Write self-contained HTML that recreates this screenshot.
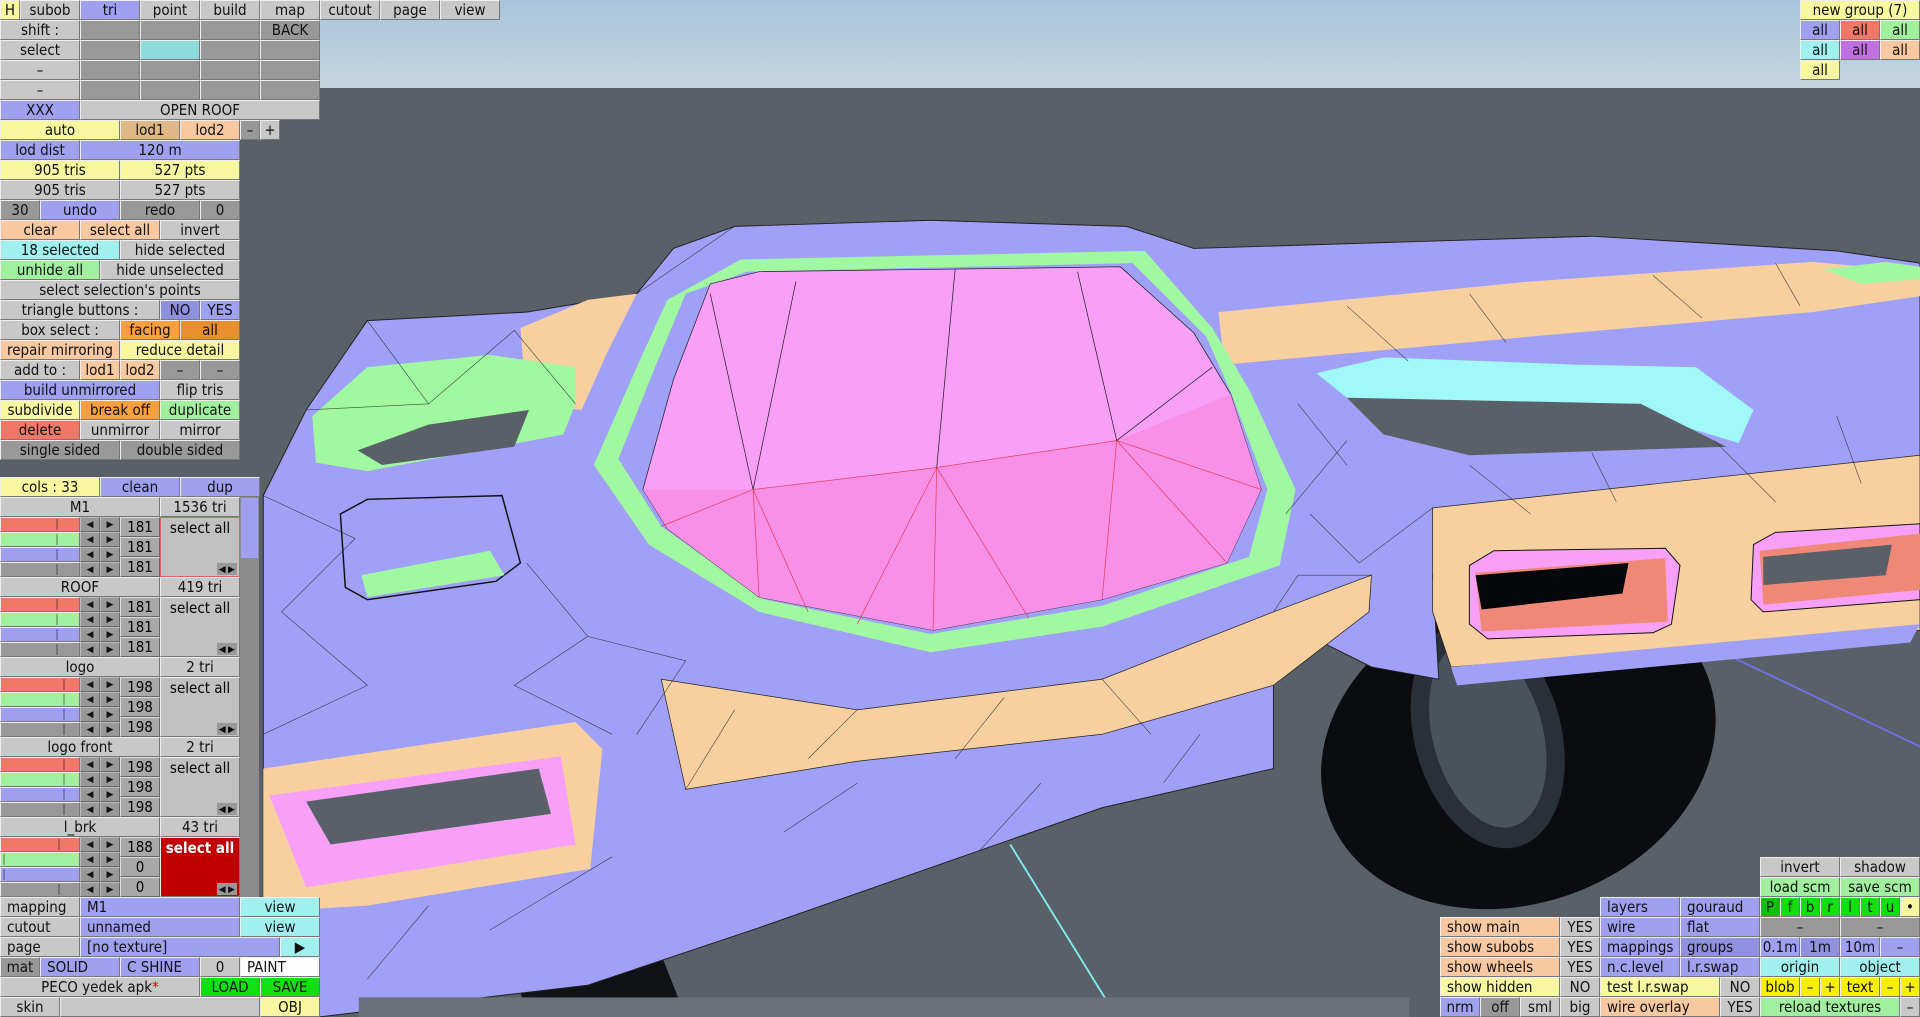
<!DOCTYPE html>
<html><head><meta charset="utf-8"><style>
html,body{margin:0;padding:0;width:1920px;height:1017px;overflow:hidden;background:#596067}
svg.s{position:absolute;left:0;top:0}
.b{position:absolute;box-sizing:border-box;height:20px;line-height:18px;text-align:center;font:15px "DejaVu Sans Condensed","DejaVu Sans","Liberation Sans",sans-serif;color:#111;border:1px solid;border-color:#eee #777 #777 #eee;white-space:nowrap;overflow:hidden}
.l{text-align:left;padding-left:6px}
.g{background:#c8c8c8}.d{background:#989898}.bl{background:#a0a0f0}.bd{background:#9090e0}.y{background:#f8f8a0}.p{background:#f8c8a0}.t{background:#e0b888}
.o{background:#f8a040}.od{background:#e89030}.c{background:#a0f0f0}.gr{background:#a0f0a0}.r{background:#f07868}.G{background:#10e010}.w{background:#fff}.Y{background:#f8f000}.pu{background:#c070e0}
.sl{position:absolute;height:15px;box-sizing:border-box;border:1px solid;border-color:#eee #777 #777 #eee}
.sl i{position:absolute;top:1px;width:2px;height:11px;background:rgba(0,0,0,.25)}
.ar{position:absolute;height:15px;width:20px;box-sizing:border-box;background:#989898;border:1px solid;border-color:#bbb #666 #666 #bbb;font:9px sans-serif;line-height:13px;text-align:center;color:#111}
.n{position:absolute;width:40px;height:20px;box-sizing:border-box;background:#a8a8a8;border:1px solid;border-color:#ddd #666 #666 #ddd;font:15px "DejaVu Sans Condensed",sans-serif;line-height:18px;text-align:center}
.sa{position:absolute;width:80px;height:60px;box-sizing:border-box;background:#c0c0c0;border:1px solid;border-color:#eee #777 #777 #eee;font:15px "DejaVu Sans Condensed",sans-serif;text-align:center;line-height:20px}
.sa span{position:absolute;right:2px;bottom:1px;font:9px sans-serif;line-height:12px;background:#999;padding:0 2px}
</style></head><body>
<svg class="s" width="1920" height="1017" viewBox="0 0 1568 831" preserveAspectRatio="none">
<defs><linearGradient id="sky" x1="0" y1="0" x2="0" y2="1"><stop offset="0" stop-color="#a8c4dc"/><stop offset="1" stop-color="#c4d4de"/></linearGradient></defs>
<rect x="0" y="0" width="1568" height="72" fill="url(#sky)"/>
<rect x="0" y="72" width="1568" height="759" fill="#596067"/>
<!-- wheel -->
<ellipse cx="1240" cy="610" rx="165" ry="128" transform="rotate(-20 1240 610)" fill="#0a0c10"/>
<ellipse cx="1215" cy="600" rx="60" ry="95" transform="rotate(-15 1215 600)" fill="#2a3038"/>
<ellipse cx="1215" cy="600" rx="45" ry="78" transform="rotate(-15 1215 600)" fill="#4a525c"/>
<path d="M420 790 L540 780 L560 831 L430 831 Z" fill="#101216"/>
<line x1="825" y1="690" x2="912" y2="831" stroke="#7ef0f0" stroke-width="1.5"/>
<line x1="1400" y1="530" x2="1568" y2="610" stroke="#7070e8" stroke-width="1.5"/>
<!-- body -->
<path d="M215 405 L250 335 L300 262 L430 255 L520 240 L550 203 L600 185 L760 180 L920 185 L975 203 L1300 193 L1500 205 L1568 215 L1568 430 L1200 455 L1170 470 L1175 555 L1120 545 L1070 520 L1040 540 L1040 628 L900 660 L800 695 L620 758 L480 805 L260 831 L215 831 Z" fill="#a0a0f8" stroke="#222" stroke-width=".8"/>
<path d="M1170 415 L1568 372 L1568 515 L1185 545 L1170 500 Z" fill="#f8d0a0" stroke="#222" stroke-width=".6"/>
<path d="M1185 545 L1568 510 L1560 525 L1190 560 Z" fill="#a0a0f8"/>
<path d="M995 255 L1250 230 L1480 214 L1568 222 L1568 242 L1480 255 L1250 275 L1000 298 Z" fill="#f8d0a0"/>
<path d="M425 268 L480 245 L520 240 L495 290 L475 335 L430 330 Z" fill="#f8d0a0"/>
<path d="M255 340 L300 300 L400 290 L470 300 L470 330 L460 355 L300 385 L258 378 Z" fill="#a0f8a0"/>
<path d="M292 368 L350 347 L432 335 L420 365 L312 380 Z" fill="#596067"/>
<path d="M1075 305 L1130 292 L1290 298 L1385 300 L1432 335 L1420 362 L1380 350 L1340 330 L1130 330 L1100 325 Z" fill="#a0f8f8"/>
<path d="M1100 325 L1340 330 L1380 350 L1410 365 L1200 372 L1130 355 Z" fill="#596067"/>
<!-- roof -->
<path d="M485 380 L520 300 L545 245 L605 212 L935 205 L990 268 L1020 318 L1058 400 L1045 462 L900 512 L760 533 L620 500 L530 445 Z" fill="#a0f8a0"/>
<path d="M505 375 L535 300 L560 240 L610 222 L925 215 L985 275 L1005 320 L1035 400 L1020 455 L900 495 L760 518 L625 490 L540 430 Z" fill="#a0a0f8"/>
<path d="M525 400 L550 310 L580 232 L620 222 L915 218 L975 272 L1005 322 L1030 400 L1002 460 L900 490 L762 515 L620 488 L545 432 Z" fill="#f8a0f8" stroke="#222" stroke-width=".6"/>
<path d="M525 400 L615 400 L765 382 L912 360 L1005 322 L1030 400 L1002 460 L900 490 L762 515 L620 488 L545 432 Z" fill="#f890e8"/>
<g stroke="#e84060" stroke-width=".6" fill="none"><path d="M615 400 L540 430 M615 400 L620 488 M615 400 L660 500 M765 382 L700 510 M765 382 L762 515 M765 382 L840 505 M912 360 L900 490 M912 360 L1002 460 M912 360 L1030 400 M615 400 L765 382 L912 360"/></g>
<g stroke="#222" stroke-width=".6" fill="none"><path d="M615 400 L650 230 M765 382 L780 220 M912 360 L880 222 M615 400 L580 240 M912 360 L990 300"/></g>
<path d="M540 555 L700 580 L900 555 L1040 500 L1120 470 L1118 500 L1040 560 L900 600 L700 622 L560 645 Z" fill="#f8d0a0" stroke="#222" stroke-width=".6"/>
<path d="M215 628 L470 590 L492 612 L482 710 L300 740 L215 745 Z" fill="#f8d0a0"/>
<path d="M220 650 L458 618 L470 690 L250 725 Z" fill="#f8a0f8"/>
<path d="M250 655 L440 628 L450 665 L270 690 Z" fill="#596067"/>
<path d="M278 420 L300 408 L410 405 L425 460 L405 475 L300 490 L282 480 Z" fill="#a0a0f8" stroke="#111" stroke-width="1.2"/>
<path d="M295 470 L400 450 L412 470 L300 488 Z" fill="#a0f8a0"/>
<path d="M1200 462 L1220 450 L1360 448 L1372 462 L1365 510 L1350 517 L1215 522 L1200 510 Z" fill="#f8a0f8" stroke="#111" stroke-width=".8"/>
<path d="M1205 468 L1360 456 L1362 508 L1210 516 Z" fill="#f08878"/>
<path d="M1205 470 L1330 460 L1325 485 L1210 498 Z" fill="#05070a"/>
<path d="M1432 445 L1450 435 L1568 428 L1568 490 L1440 500 L1430 490 Z" fill="#f8a0f8" stroke="#111" stroke-width=".8"/>
<path d="M1437 450 L1568 436 L1568 482 L1440 494 Z" fill="#f08878"/>
<path d="M1440 455 L1545 445 L1540 470 L1440 478 Z" fill="#596067"/>
<path d="M1490 220 L1540 214 L1568 218 L1568 228 L1520 232 Z" fill="#a0f8a0"/>
<g stroke="#222" stroke-width=".5" fill="none" opacity=".8">
<path d="M300 262 L350 330 L420 270 L470 330 M520 240 L600 185 M250 335 L350 330 M215 405 L290 440 L230 500 L300 560 L215 600 M430 460 L480 520 L420 560 L500 600 M480 520 L560 540 L520 600 M600 580 L560 645 M700 580 L660 620 M820 570 L780 620 M900 555 L940 600 M1040 500 L1060 470 L1120 470 M1070 420 L1110 460 L1170 415 M1100 360 L1050 420 M1060 330 L1100 380 M1200 380 L1250 420 M1300 370 L1320 410 M1400 360 L1450 410 M1500 340 L1520 395 M1100 250 L1150 295 M1200 240 L1230 280 M1350 225 L1390 260 M1450 215 L1470 250 M640 680 L700 640 M400 760 L500 700 M300 800 L350 740 M800 695 L850 640 M950 640 L980 600"/>
</g>
<rect x="293" y="815" width="858" height="16" fill="#6b7178"/>
</svg>

<!-- top menu -->
<div class="b y" style="left:0;top:0;width:20px">H</div>
<div class="b g" style="left:20px;top:0;width:60px">subob</div>
<div class="b bl" style="left:80px;top:0;width:60px">tri</div>
<div class="b g" style="left:140px;top:0;width:60px">point</div>
<div class="b g" style="left:200px;top:0;width:60px">build</div>
<div class="b g" style="left:260px;top:0;width:60px">map</div>
<div class="b g" style="left:320px;top:0;width:60px">cutout</div>
<div class="b g" style="left:380px;top:0;width:60px">page</div>
<div class="b g" style="left:440px;top:0;width:60px">view</div>

<div class="b g" style="left:0;top:20px;width:80px">shift :</div>
<div class="b d" style="left:80px;top:20px;width:60px"></div><div class="b d" style="left:140px;top:20px;width:60px"></div><div class="b d" style="left:200px;top:20px;width:60px"></div><div class="b d" style="left:260px;top:20px;width:60px">BACK</div>
<div class="b g" style="left:0;top:40px;width:80px">select</div>
<div class="b d" style="left:80px;top:40px;width:60px"></div><div class="b c" style="left:140px;top:40px;width:60px;background:#8cdcdc"></div><div class="b d" style="left:200px;top:40px;width:60px"></div><div class="b d" style="left:260px;top:40px;width:60px"></div>
<div class="b g" style="left:0;top:60px;width:80px">–</div>
<div class="b d" style="left:80px;top:60px;width:60px"></div><div class="b d" style="left:140px;top:60px;width:60px"></div><div class="b d" style="left:200px;top:60px;width:60px"></div><div class="b d" style="left:260px;top:60px;width:60px"></div>
<div class="b g" style="left:0;top:80px;width:80px">–</div>
<div class="b d" style="left:80px;top:80px;width:60px"></div><div class="b d" style="left:140px;top:80px;width:60px"></div><div class="b d" style="left:200px;top:80px;width:60px"></div><div class="b d" style="left:260px;top:80px;width:60px"></div>
<div class="b bl" style="left:0;top:100px;width:80px">XXX</div>
<div class="b g" style="left:80px;top:100px;width:240px">OPEN ROOF</div>

<div class="b y" style="left:0;top:120px;width:120px">auto</div>
<div class="b t" style="left:120px;top:120px;width:60px">lod1</div>
<div class="b p" style="left:180px;top:120px;width:60px">lod2</div>
<div class="b d" style="left:240px;top:120px;width:20px">–</div>
<div class="b g" style="left:260px;top:120px;width:20px">+</div>
<div class="b bl" style="left:0;top:140px;width:80px">lod dist</div>
<div class="b bl" style="left:80px;top:140px;width:160px">120 m</div>
<div class="b y" style="left:0;top:160px;width:120px">905 tris</div>
<div class="b y" style="left:120px;top:160px;width:120px">527 pts</div>
<div class="b g" style="left:0;top:180px;width:120px">905 tris</div>
<div class="b g" style="left:120px;top:180px;width:120px">527 pts</div>
<div class="b d" style="left:0;top:200px;width:40px">30</div>
<div class="b bl" style="left:40px;top:200px;width:80px">undo</div>
<div class="b d" style="left:120px;top:200px;width:80px">redo</div>
<div class="b d" style="left:200px;top:200px;width:40px">0</div>
<div class="b p" style="left:0;top:220px;width:80px">clear</div>
<div class="b p" style="left:80px;top:220px;width:80px">select all</div>
<div class="b g" style="left:160px;top:220px;width:80px">invert</div>
<div class="b c" style="left:0;top:240px;width:120px">18 selected</div>
<div class="b g" style="left:120px;top:240px;width:120px">hide selected</div>
<div class="b gr" style="left:0;top:260px;width:100px">unhide all</div>
<div class="b g" style="left:100px;top:260px;width:140px">hide unselected</div>
<div class="b g" style="left:0;top:280px;width:240px">select selection's points</div>
<div class="b g" style="left:0;top:300px;width:160px">triangle buttons :</div>
<div class="b bd" style="left:160px;top:300px;width:40px">NO</div>
<div class="b bl" style="left:200px;top:300px;width:40px">YES</div>
<div class="b g" style="left:0;top:320px;width:120px">box select :</div>
<div class="b o" style="left:120px;top:320px;width:60px">facing</div>
<div class="b od" style="left:180px;top:320px;width:60px">all</div>
<div class="b p" style="left:0;top:340px;width:120px">repair mirroring</div>
<div class="b y" style="left:120px;top:340px;width:120px">reduce detail</div>
<div class="b g" style="left:0;top:360px;width:80px">add to :</div>
<div class="b p" style="left:80px;top:360px;width:40px">lod1</div>
<div class="b p" style="left:120px;top:360px;width:40px">lod2</div>
<div class="b d" style="left:160px;top:360px;width:40px">–</div>
<div class="b d" style="left:200px;top:360px;width:40px">–</div>
<div class="b bl" style="left:0;top:380px;width:160px">build unmirrored</div>
<div class="b g" style="left:160px;top:380px;width:80px">flip tris</div>
<div class="b y" style="left:0;top:400px;width:80px">subdivide</div>
<div class="b o" style="left:80px;top:400px;width:80px">break off</div>
<div class="b gr" style="left:160px;top:400px;width:80px">duplicate</div>
<div class="b r" style="left:0;top:420px;width:80px">delete</div>
<div class="b g" style="left:80px;top:420px;width:80px">unmirror</div>
<div class="b g" style="left:160px;top:420px;width:80px">mirror</div>
<div class="b d" style="left:0;top:440px;width:120px">single sided</div>
<div class="b d" style="left:120px;top:440px;width:120px">double sided</div>

<!-- cols -->
<div class="b y" style="left:0;top:477px;width:100px">cols : 33</div>
<div class="b bl" style="left:100px;top:477px;width:80px">clean</div>
<div class="b bl" style="left:180px;top:477px;width:80px">dup</div>
<div style="position:absolute;left:240px;top:497px;width:19px;height:400px;background:#8c8c8c"></div>
<div style="position:absolute;left:241px;top:498px;width:17px;height:60px;background:#a0a0f0"></div>

<!-- group M1 -->
<div class="b g" style="left:0;top:497px;width:160px">M1</div><div class="b g" style="left:160px;top:497px;width:80px">1536 tri</div>
<div class="sl r" style="left:0;top:517px;width:80px"><i style="left:55px"></i></div><div class="sl gr" style="left:0;top:532px;width:80px"><i style="left:55px"></i></div><div class="sl bl" style="left:0;top:547px;width:80px"><i style="left:55px"></i></div><div class="sl d" style="left:0;top:562px;width:80px"><i style="left:55px"></i></div>
<div class="ar" style="left:80px;top:517px">◀</div><div class="ar" style="left:100px;top:517px">▶</div><div class="ar" style="left:80px;top:532px">◀</div><div class="ar" style="left:100px;top:532px">▶</div><div class="ar" style="left:80px;top:547px">◀</div><div class="ar" style="left:100px;top:547px">▶</div><div class="ar" style="left:80px;top:562px">◀</div><div class="ar" style="left:100px;top:562px">▶</div>
<div class="n" style="left:120px;top:517px">181</div><div class="n" style="left:120px;top:537px">181</div><div class="n" style="left:120px;top:557px">181</div>
<div class="sa" style="left:160px;top:517px;border:1px solid #e06060">select all<span>◀ ▶</span></div>
<!-- ROOF -->
<div class="b g" style="left:0;top:577px;width:160px">ROOF</div><div class="b g" style="left:160px;top:577px;width:80px">419 tri</div>
<div class="sl r" style="left:0;top:597px;width:80px"><i style="left:55px"></i></div><div class="sl gr" style="left:0;top:612px;width:80px"><i style="left:55px"></i></div><div class="sl bl" style="left:0;top:627px;width:80px"><i style="left:55px"></i></div><div class="sl d" style="left:0;top:642px;width:80px"><i style="left:55px"></i></div>
<div class="ar" style="left:80px;top:597px">◀</div><div class="ar" style="left:100px;top:597px">▶</div><div class="ar" style="left:80px;top:612px">◀</div><div class="ar" style="left:100px;top:612px">▶</div><div class="ar" style="left:80px;top:627px">◀</div><div class="ar" style="left:100px;top:627px">▶</div><div class="ar" style="left:80px;top:642px">◀</div><div class="ar" style="left:100px;top:642px">▶</div>
<div class="n" style="left:120px;top:597px">181</div><div class="n" style="left:120px;top:617px">181</div><div class="n" style="left:120px;top:637px">181</div>
<div class="sa" style="left:160px;top:597px">select all<span>◀ ▶</span></div>
<!-- logo -->
<div class="b g" style="left:0;top:657px;width:160px">logo</div><div class="b g" style="left:160px;top:657px;width:80px">2 tri</div>
<div class="sl r" style="left:0;top:677px;width:80px"><i style="left:62px"></i></div><div class="sl gr" style="left:0;top:692px;width:80px"><i style="left:62px"></i></div><div class="sl bl" style="left:0;top:707px;width:80px"><i style="left:62px"></i></div><div class="sl d" style="left:0;top:722px;width:80px"><i style="left:62px"></i></div>
<div class="ar" style="left:80px;top:677px">◀</div><div class="ar" style="left:100px;top:677px">▶</div><div class="ar" style="left:80px;top:692px">◀</div><div class="ar" style="left:100px;top:692px">▶</div><div class="ar" style="left:80px;top:707px">◀</div><div class="ar" style="left:100px;top:707px">▶</div><div class="ar" style="left:80px;top:722px">◀</div><div class="ar" style="left:100px;top:722px">▶</div>
<div class="n" style="left:120px;top:677px">198</div><div class="n" style="left:120px;top:697px">198</div><div class="n" style="left:120px;top:717px">198</div>
<div class="sa" style="left:160px;top:677px">select all<span>◀ ▶</span></div>
<!-- logo front -->
<div class="b g" style="left:0;top:737px;width:160px">logo front</div><div class="b g" style="left:160px;top:737px;width:80px">2 tri</div>
<div class="sl r" style="left:0;top:757px;width:80px"><i style="left:62px"></i></div><div class="sl gr" style="left:0;top:772px;width:80px"><i style="left:62px"></i></div><div class="sl bl" style="left:0;top:787px;width:80px"><i style="left:62px"></i></div><div class="sl d" style="left:0;top:802px;width:80px"><i style="left:62px"></i></div>
<div class="ar" style="left:80px;top:757px">◀</div><div class="ar" style="left:100px;top:757px">▶</div><div class="ar" style="left:80px;top:772px">◀</div><div class="ar" style="left:100px;top:772px">▶</div><div class="ar" style="left:80px;top:787px">◀</div><div class="ar" style="left:100px;top:787px">▶</div><div class="ar" style="left:80px;top:802px">◀</div><div class="ar" style="left:100px;top:802px">▶</div>
<div class="n" style="left:120px;top:757px">198</div><div class="n" style="left:120px;top:777px">198</div><div class="n" style="left:120px;top:797px">198</div>
<div class="sa" style="left:160px;top:757px">select all<span>◀ ▶</span></div>
<!-- l_brk -->
<div class="b g" style="left:0;top:817px;width:160px">l_brk</div><div class="b g" style="left:160px;top:817px;width:80px">43 tri</div>
<div class="sl r" style="left:0;top:837px;width:80px"><i style="left:57px"></i></div><div class="sl gr" style="left:0;top:852px;width:80px"><i style="left:2px"></i></div><div class="sl bl" style="left:0;top:867px;width:80px"><i style="left:2px"></i></div><div class="sl d" style="left:0;top:882px;width:80px"><i style="left:57px"></i></div>
<div class="ar" style="left:80px;top:837px">◀</div><div class="ar" style="left:100px;top:837px">▶</div><div class="ar" style="left:80px;top:852px">◀</div><div class="ar" style="left:100px;top:852px">▶</div><div class="ar" style="left:80px;top:867px">◀</div><div class="ar" style="left:100px;top:867px">▶</div><div class="ar" style="left:80px;top:882px">◀</div><div class="ar" style="left:100px;top:882px">▶</div>
<div class="n" style="left:120px;top:837px">188</div><div class="n" style="left:120px;top:857px">0</div><div class="n" style="left:120px;top:877px">0</div>
<div class="sa" style="left:160px;top:837px;background:#c00000;color:#fff;font-weight:bold">select all<span style="color:#111;font-weight:normal">◀ ▶</span></div>

<!-- bottom-left -->
<div class="b g l" style="left:0;top:897px;width:80px">mapping</div><div class="b bl l" style="left:80px;top:897px;width:160px">M1</div><div class="b c" style="left:240px;top:897px;width:80px">view</div>
<div class="b g l" style="left:0;top:917px;width:80px">cutout</div><div class="b bl l" style="left:80px;top:917px;width:160px">unnamed</div><div class="b c" style="left:240px;top:917px;width:80px">view</div>
<div class="b g l" style="left:0;top:937px;width:80px">page</div><div class="b bl l" style="left:80px;top:937px;width:200px">[no texture]</div><div class="b c" style="left:280px;top:937px;width:40px">▶</div>
<div class="b d" style="left:0;top:957px;width:40px">mat</div><div class="b bl l" style="left:40px;top:957px;width:80px">SOLID</div><div class="b bl l" style="left:120px;top:957px;width:80px">C SHINE</div><div class="b g" style="left:200px;top:957px;width:40px">0</div><div class="b w l" style="left:240px;top:957px;width:80px">PAINT</div>
<div class="b g" style="left:0;top:977px;width:200px">PECO yedek apk<span style="color:#e00">*</span></div><div class="b G" style="left:200px;top:977px;width:60px">LOAD</div><div class="b G" style="left:260px;top:977px;width:60px">SAVE</div>
<div class="b g" style="left:0;top:997px;width:60px">skin</div><div class="b g" style="left:60px;top:997px;width:200px"></div><div class="b y" style="left:260px;top:997px;width:60px">OBJ</div>

<!-- top right -->
<div class="b y" style="left:1800px;top:0;width:120px">new group (7)</div>
<div class="b bl" style="left:1800px;top:20px;width:40px">all</div><div class="b r" style="left:1840px;top:20px;width:40px">all</div><div class="b gr" style="left:1880px;top:20px;width:40px">all</div>
<div class="b c" style="left:1800px;top:40px;width:40px">all</div><div class="b pu" style="left:1840px;top:40px;width:40px">all</div><div class="b p" style="left:1880px;top:40px;width:40px">all</div>
<div class="b y" style="left:1800px;top:60px;width:40px">all</div>

<!-- bottom right -->
<div class="b g" style="left:1760px;top:857px;width:80px">invert</div><div class="b g" style="left:1840px;top:857px;width:80px">shadow</div>
<div class="b gr" style="left:1760px;top:877px;width:80px">load scm</div><div class="b gr" style="left:1840px;top:877px;width:80px">save scm</div>
<div class="b bl l" style="left:1600px;top:897px;width:80px">layers</div><div class="b bl l" style="left:1680px;top:897px;width:80px">gouraud</div>
<div class="b G" style="left:1760px;top:897px;width:20px;background:#10c010">P</div><div class="b G" style="left:1780px;top:897px;width:20px">f</div><div class="b G" style="left:1800px;top:897px;width:20px">b</div><div class="b G" style="left:1820px;top:897px;width:20px">r</div><div class="b G" style="left:1840px;top:897px;width:20px">l</div><div class="b G" style="left:1860px;top:897px;width:20px">t</div><div class="b G" style="left:1880px;top:897px;width:20px">u</div><div class="b y" style="left:1900px;top:897px;width:20px">•</div>
<div class="b p l" style="left:1440px;top:917px;width:120px">show main</div><div class="b g" style="left:1560px;top:917px;width:40px">YES</div><div class="b bl l" style="left:1600px;top:917px;width:80px">wire</div><div class="b bl l" style="left:1680px;top:917px;width:80px">flat</div><div class="b d" style="left:1760px;top:917px;width:80px">–</div><div class="b d" style="left:1840px;top:917px;width:80px">–</div>
<div class="b p l" style="left:1440px;top:937px;width:120px">show subobs</div><div class="b g" style="left:1560px;top:937px;width:40px">YES</div><div class="b bl l" style="left:1600px;top:937px;width:80px">mappings</div><div class="b bd l" style="left:1680px;top:937px;width:80px">groups</div><div class="b bl" style="left:1760px;top:937px;width:40px">0.1m</div><div class="b bd" style="left:1800px;top:937px;width:40px">1m</div><div class="b bl" style="left:1840px;top:937px;width:40px">10m</div><div class="b bl" style="left:1880px;top:937px;width:40px">–</div>
<div class="b p l" style="left:1440px;top:957px;width:120px">show wheels</div><div class="b g" style="left:1560px;top:957px;width:40px">YES</div><div class="b bl l" style="left:1600px;top:957px;width:80px">n.c.level</div><div class="b bl l" style="left:1680px;top:957px;width:80px">l.r.swap</div><div class="b c" style="left:1760px;top:957px;width:80px">origin</div><div class="b c" style="left:1840px;top:957px;width:80px">object</div>
<div class="b y l" style="left:1440px;top:977px;width:120px">show hidden</div><div class="b g" style="left:1560px;top:977px;width:40px">NO</div><div class="b y l" style="left:1600px;top:977px;width:120px">test l.r.swap</div><div class="b g" style="left:1720px;top:977px;width:40px">NO</div><div class="b Y" style="left:1760px;top:977px;width:40px">blob</div><div class="b Y" style="left:1800px;top:977px;width:20px">–</div><div class="b Y" style="left:1820px;top:977px;width:20px">+</div><div class="b Y" style="left:1840px;top:977px;width:40px">text</div><div class="b Y" style="left:1880px;top:977px;width:20px">–</div><div class="b Y" style="left:1900px;top:977px;width:20px">+</div>
<div class="b bl" style="left:1440px;top:997px;width:40px">nrm</div><div class="b d" style="left:1480px;top:997px;width:40px">off</div><div class="b g" style="left:1520px;top:997px;width:40px">sml</div><div class="b g" style="left:1560px;top:997px;width:40px">big</div><div class="b p l" style="left:1600px;top:997px;width:120px">wire overlay</div><div class="b g" style="left:1720px;top:997px;width:40px">YES</div><div class="b gr" style="left:1760px;top:997px;width:140px">reload textures</div><div class="b g" style="left:1900px;top:997px;width:20px">–</div>
</body></html>
